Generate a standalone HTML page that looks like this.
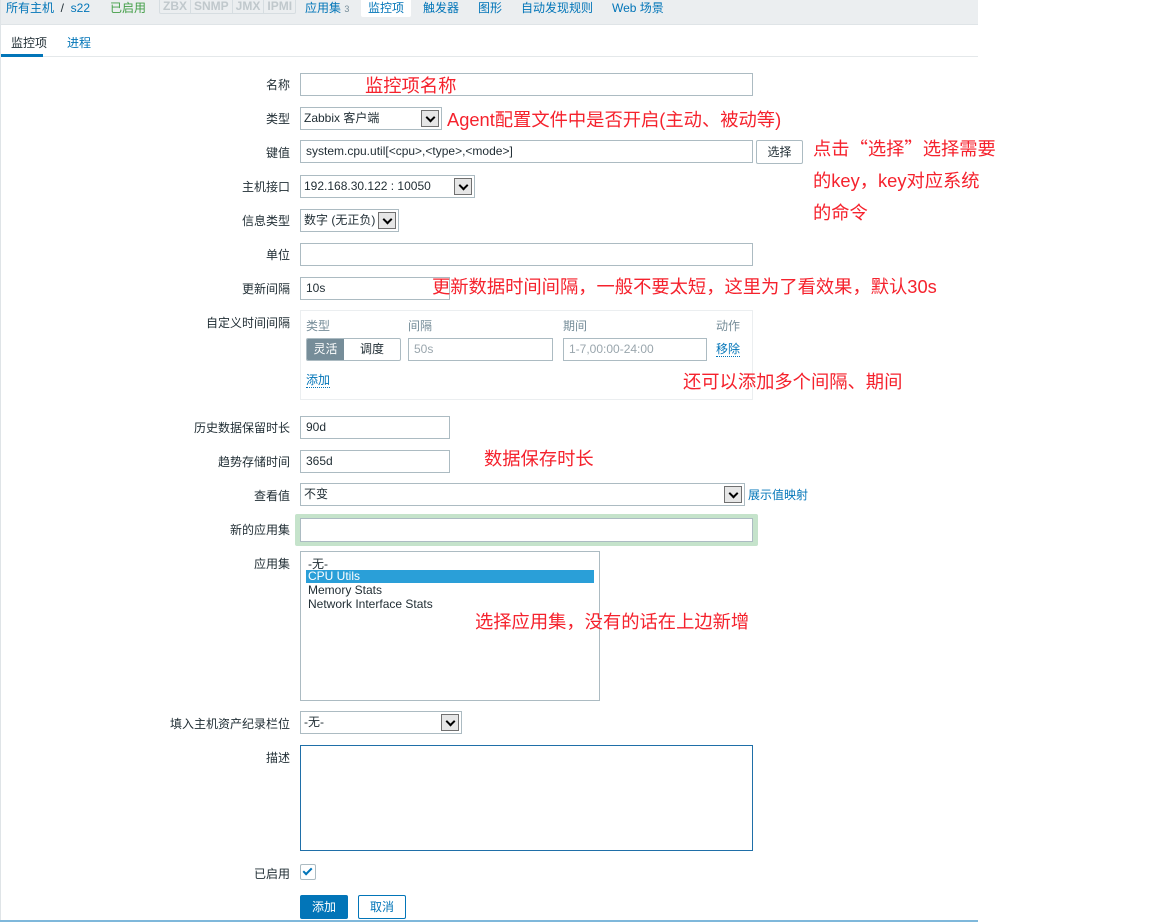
<!DOCTYPE html>
<html><head><meta charset="utf-8"><style>
*{box-sizing:border-box;margin:0;padding:0}
body{width:1152px;height:922px;background:#fff;position:relative;overflow:hidden;font-family:"Liberation Sans","Noto Sans CJK SC",sans-serif;font-size:12px;color:#1f2c33}
.a{position:absolute;white-space:nowrap}
.lbl{position:absolute;right:862px;text-align:right;font-size:12px;color:#1f2c33;white-space:nowrap}
.in{position:absolute;border:1px solid #acbbc2;background:#fff;height:23px;padding:3px 5px;font-size:12px;line-height:15px;white-space:nowrap}
.sel{position:absolute;border:1px solid #acbbc2;background:#fff;height:23px;padding:3px 3px;font-size:12px;line-height:15px;white-space:nowrap;font-family:"Liberation Sans","Noto Sans CJK SC",sans-serif}
.dd{position:absolute;right:2px;top:2px;width:18px;height:17px;border:1px solid #707070;background:#e6e6e6}
.dd:after{content:"";position:absolute;left:5px;top:3px;width:5px;height:5px;border-right:2px solid #000;border-bottom:2px solid #000;transform:rotate(45deg)}
.red{position:absolute;color:#f5222d;font-size:18.3px;white-space:nowrap;font-family:"Liberation Sans","Noto Sans CJK SC",sans-serif}
.q{font-family:"Noto Sans CJK SC",sans-serif}
.lnk{color:#0275b8}
</style></head><body>
<div class="a" style="left:0;top:0;width:978px;height:25px;background:#ebeef0;border-bottom:1px solid #dfe4e7"></div>
<div class="a" style="left:0;top:0;width:1px;height:922px;background:#dfe4e7"></div>
<div class="a lnk" style="left:6px;top:-1px;font-size:12px">所有主机 &nbsp;<span style="color:#1f2c33">/</span>&nbsp; s22</div>
<div class="a" style="left:110px;top:-1px;color:#429e47">已启用</div>
<div class="a" style="left:159px;top:-2px;height:16px;border:1px solid #d6dde1;border-radius:2px;color:#c0c8cc;font-size:12px;line-height:14px;font-weight:bold;display:flex">
<span style="padding:0 3px;border-right:1px solid #d6dde1">ZBX</span><span style="padding:0 3px;border-right:1px solid #d6dde1">SNMP</span><span style="padding:0 3px;border-right:1px solid #d6dde1">JMX</span><span style="padding:0 3px">IPMI</span></div>
<div class="a lnk" style="left:305px;top:-1px">应用集 <span style="font-size:9px;color:#768d99">3</span></div>
<div class="a" style="left:361px;top:-3px;width:50px;height:20px;background:#fff;border-radius:2px"></div>
<div class="a lnk" style="left:368px;top:-1px">监控项</div>
<div class="a lnk" style="left:423px;top:-1px">触发器</div>
<div class="a lnk" style="left:478px;top:-1px">图形</div>
<div class="a lnk" style="left:521px;top:-1px">自动发现规则</div>
<div class="a lnk" style="left:612px;top:-1px">Web 场景</div>
<div class="a" style="left:0;top:56px;width:978px;height:1px;background:#e4e8ea"></div>
<div class="a" style="left:11px;top:34px">监控项</div>
<div class="a" style="left:1px;top:54px;width:42px;height:3px;background:#0275b8"></div>
<div class="a lnk" style="left:67px;top:34px">进程</div>

<div class="lbl" style="top:76px">名称</div>
<div class="in" style="left:300px;top:73px;width:453px"></div>
<div class="red" style="left:365px;top:72px">监控项名称</div>

<div class="lbl" style="top:110px">类型</div>
<div class="sel" style="left:300px;top:107px;width:142px">Zabbix 客户端<span class="dd"></span></div>
<div class="red" style="left:447px;top:106px">Agent配置文件中是否开启(主动、被动等)</div>

<div class="lbl" style="top:144px">键值</div>
<div class="in" style="left:300px;top:140px;width:453px">system.cpu.util[&lt;cpu&gt;,&lt;type&gt;,&lt;mode&gt;]</div>
<div class="a" style="left:756px;top:140px;width:47px;height:24px;border:1px solid #acbbc2;border-radius:2px;background:#fff;text-align:center;line-height:22px">选择</div>
<div class="red" style="left:813px;top:132px;line-height:32px">点击<span class="q">“</span>选择<span class="q">”</span>选择需要<br>的key，key对应系统<br>的命令</div>

<div class="lbl" style="top:178px">主机接口</div>
<div class="sel" style="left:300px;top:175px;width:175px">192.168.30.122 : 10050<span class="dd"></span></div>

<div class="lbl" style="top:212px">信息类型</div>
<div class="sel" style="left:300px;top:209px;width:99px">数字 (无正负)<span class="dd"></span></div>

<div class="lbl" style="top:246px">单位</div>
<div class="in" style="left:300px;top:243px;width:453px"></div>

<div class="lbl" style="top:280px">更新间隔</div>
<div class="in" style="left:300px;top:277px;width:150px">10s</div>
<div class="red" style="left:432px;top:273px;background:transparent">更新数据时间间隔，一般不要太短，这里为了看效果，默认30s</div>

<div class="lbl" style="top:314px">自定义时间间隔</div>
<div class="a" style="left:300px;top:310px;width:453px;height:90px;border:1px solid #ebeef0"></div>
<div class="a" style="left:306px;top:317px;color:#768d99">类型</div>
<div class="a" style="left:408px;top:317px;color:#768d99">间隔</div>
<div class="a" style="left:563px;top:317px;color:#768d99">期间</div>
<div class="a" style="left:716px;top:317px;color:#768d99">动作</div>
<div class="a" style="left:306px;top:338px;width:95px;height:23px;border:1px solid #acbbc2;border-radius:2px;overflow:hidden;display:flex">
<span style="width:37px;background:#768d99;color:#fff;text-align:center;line-height:21px">灵活</span><span style="flex:1;text-align:center;line-height:21px">调度</span></div>
<div class="in" style="left:408px;top:338px;width:145px;color:#9aa6ad">50s</div>
<div class="in" style="left:563px;top:338px;width:144px;color:#9aa6ad">1-7,00:00-24:00</div>
<div class="a lnk" style="left:716px;top:342px;border-bottom:1px dotted #0275b8;line-height:14px">移除</div>
<div class="a lnk" style="left:306px;top:373px;border-bottom:1px dotted #0275b8;line-height:14px">添加</div>
<div class="red" style="left:683px;top:368px">还可以添加多个间隔、期间</div>

<div class="lbl" style="top:419px">历史数据保留时长</div>
<div class="in" style="left:300px;top:416px;width:150px">90d</div>

<div class="lbl" style="top:453px">趋势存储时间</div>
<div class="in" style="left:300px;top:450px;width:150px">365d</div>
<div class="red" style="left:484px;top:445px">数据保存时长</div>

<div class="lbl" style="top:487px">查看值</div>
<div class="sel" style="left:300px;top:483px;width:445px">不变<span class="dd"></span></div>
<div class="a lnk" style="left:748px;top:486px">展示值映射</div>

<div class="lbl" style="top:521px">新的应用集</div>
<div class="a" style="left:295px;top:514px;width:463px;height:32px;background:#c5e3cb;border-radius:2px"></div>
<div class="in" style="left:300px;top:518px;width:453px;height:24px"></div>

<div class="lbl" style="top:555px">应用集</div>
<div class="a" style="left:300px;top:551px;width:300px;height:150px;border:1px solid #acbbc2"></div>
<div class="a" style="left:308px;top:555px">-无-</div>
<div class="a" style="left:306px;top:570px;width:288px;height:13px;background:#2a9fd8"></div>
<div class="a" style="left:308px;top:569px;color:#fff">CPU Utils</div>
<div class="a" style="left:308px;top:583px">Memory Stats</div>
<div class="a" style="left:308px;top:597px">Network Interface Stats</div>
<div class="red" style="left:475px;top:608px">选择应用集，没有的话在上边新增</div>

<div class="lbl" style="top:715px">填入主机资产纪录栏位</div>
<div class="sel" style="left:300px;top:711px;width:162px">-无-<span class="dd"></span></div>

<div class="lbl" style="top:749px">描述</div>
<div class="a" style="left:300px;top:745px;width:453px;height:106px;border:1px solid #1f6fa8"></div>

<div class="lbl" style="top:865px">已启用</div>
<div class="a" style="left:300px;top:864px;width:16px;height:16px;border:1px solid #acbbc2;border-radius:2px"></div>
<div class="a" style="left:305px;top:866px;width:5px;height:9px;border-right:2px solid #0275b8;border-bottom:2px solid #0275b8;transform:rotate(45deg)"></div>

<div class="a" style="left:300px;top:895px;width:48px;height:24px;background:#0275b8;border-radius:2px;color:#fff;text-align:center;line-height:24px">添加</div>
<div class="a" style="left:358px;top:895px;width:48px;height:24px;border:1px solid #0275b8;border-radius:2px;color:#0275b8;text-align:center;line-height:22px">取消</div>
<div class="a" style="left:0;top:920px;width:978px;height:2px;background:#7fb8db"></div>
</body></html>
